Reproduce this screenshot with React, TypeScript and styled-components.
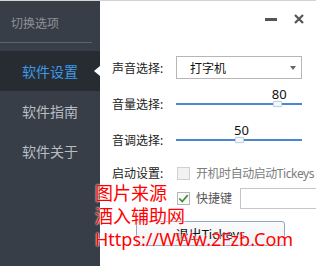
import React from "react";
import styled, { createGlobalStyle } from "styled-components";

const Global = createGlobalStyle`
  html, body { margin: 0; padding: 0; background: #ffffff; }
  body { font-family: "Noto Sans", "Noto Sans CJK SC", sans-serif; }
  * { box-sizing: border-box; }
`;

const Window = styled.div`
  position: relative;
  width: 316px;
  height: 266px;
  display: flex;
  border-top: 1px solid #d3d3d3;
  overflow: hidden;
  background: #ffffff;
`;

const Sidebar = styled.nav`
  width: 100px;
  flex: none;
  background: #373e47;
  display: flex;
  flex-direction: column;
`;

const SideHeader = styled.div`
  height: 42px;
  padding-left: 11px;
  display: flex;
  align-items: center;
  font-size: 12px;
  color: #8d9299;
  border-bottom: 1px solid #5d636b;
  margin: 0 8px 0 0;
  padding-top: 2px;
`;

const Divider = styled.div`
  height: 8px;
`;

const SideItem = styled.div<{ $active?: boolean }>`
  position: relative;
  height: 40px;
  display: flex;
  align-items: center;
  padding-left: 22px;
  font-size: 14px;
  color: ${(p) => (p.$active ? "#3d9ae8" : "#b9bdc3")};
  background: ${(p) => (p.$active ? "#272c32" : "transparent")};
`;

const Pointer = styled.span`
  position: absolute;
  right: 0;
  top: 50%;
  margin-top: -5px;
  width: 0;
  height: 0;
  border-top: 5px solid transparent;
  border-bottom: 5px solid transparent;
  border-right: 6px solid #ffffff;
`;

const Panel = styled.main`
  width: 216px;
  min-width: 0;
  flex: none;
  display: flex;
  flex-direction: column;
  padding: 0 14px 0 12px;
`;

const TitleBar = styled.div`
  height: 36px;
  display: flex;
  align-items: center;
  justify-content: flex-end;
  gap: 17px;
  margin-right: -2px;
`;

const MinBtn = styled.span`
  width: 12px;
  height: 3px;
  background: #555;
`;

const Row = styled.div<{ $mt: number; $h: number }>`
  margin-top: ${(p) => p.$mt}px;
  height: ${(p) => p.$h}px;
  display: grid;
  grid-template-columns: 64px 126px;
  align-items: center;
`;

const Label = styled.span`
  font-size: 12px;
  color: #222;
  white-space: nowrap;
`;

const Select = styled.div`
  height: 23px;
  border: 1px solid #b6b6b6;
  background: #fff;
  display: flex;
  align-items: center;
  justify-content: space-between;
  padding: 0 5px 0 13px;
  font-size: 12px;
  color: #111;
`;

const Caret = styled.span`
  width: 0;
  height: 0;
  border-left: 3.5px solid transparent;
  border-right: 3.5px solid transparent;
  border-top: 4px solid #666;
`;

const Track = styled.div`
  position: relative;
  height: 2px;
  background: #4a88cd;
`;

const Thumb = styled.span`
  position: absolute;
  top: -2px;
  width: 9px;
  height: 6px;
  margin-left: -4px;
  background: #f4f7fa;
  border: 1px solid #c0d3e6;
  border-radius: 1px;
  box-shadow: 0 0 1px rgba(80, 120, 170, 0.4);
`;

const Value = styled.span`
  position: absolute;
  bottom: 4px;
  margin-left: -5px;
  font-size: 13px;
  line-height: 14px;
  color: #111;
`;

const CheckLine = styled.div`
  display: flex;
  align-items: center;
  gap: 6px;
  margin-left: 1px;
  white-space: nowrap;
`;

const Box = styled.span<{ $disabled?: boolean }>`
  width: 13px;
  height: 13px;
  flex: none;
  border: 1px solid ${(p) => (p.$disabled ? "#d0d0d0" : "#b5b5b5")};
  background: ${(p) => (p.$disabled ? "#f2f2f2" : "#fafafa")};
  display: flex;
  align-items: center;
  justify-content: center;
`;

const CheckText = styled.span<{ $muted?: boolean }>`
  font-size: 12px;
  letter-spacing: ${(p) => (p.$muted ? "-0.45px" : "0")};
  color: ${(p) => (p.$muted ? "#7c7c7c" : "#555")};
  white-space: nowrap;
`;

const KeyInput = styled.div`
  width: 81px;
  height: 21px;
  flex: none;
  border: 1px solid #c6c6c6;
  background: #fff;
  margin-left: 2px;
`;

const ButtonRow = styled.div`
  margin-top: 11px;
  padding-left: 24px;
  display: flex;
`;

const Button = styled.button`
  width: 149px;
  height: 25px;
  border: 1px solid #8ea8c6;
  border-radius: 3px;
  background: linear-gradient(#fbfbfb, #eef1f4);
  font-family: "Noto Sans", "Noto Sans CJK SC", sans-serif;
  font-size: 13px;
  color: #111;
  padding: 0;
`;

const Watermark = styled.div`
  position: absolute;
  left: 95px;
  top: 181px;
  color: #ff0000;
  font-size: 18px;
  line-height: 23px;
  font-family: "Noto Sans", "Noto Sans CJK SC", sans-serif;
  text-shadow: 0 0 2px #fff, 0 0 2px #fff;
  white-space: nowrap;
  pointer-events: none;
`;

function Slider({ value }: { value: number }) {
  return (
    <Track>
      <Value style={{ left: `${value}%` }}>{value}</Value>
      <Thumb style={{ left: `${value}%` }} />
    </Track>
  );
}

export default function App() {
  return (
    <>
      <Global />
      <Window>
        <Sidebar>
          <SideHeader>切换选项</SideHeader>
          <Divider />
          <SideItem $active>
            软件设置
            <Pointer />
          </SideItem>
          <SideItem>软件指南</SideItem>
          <SideItem>软件关于</SideItem>
        </Sidebar>
        <Panel>
          <TitleBar>
            <MinBtn />
            <svg width="10" height="10" viewBox="0 0 10 10">
              <path d="M1 1 L9 9 M9 1 L1 9" stroke="#555" strokeWidth="2.2" />
            </svg>
          </TitleBar>
          <Row $mt={19} $h={23}>
            <Label>声音选择:</Label>
            <Select>
              打字机
              <Caret />
            </Select>
          </Row>
          <Row $mt={13} $h={24}>
            <Label>音量选择:</Label>
            <Slider value={80} />
          </Row>
          <Row $mt={12} $h={24}>
            <Label>音调选择:</Label>
            <Slider value={50} />
          </Row>
          <Row $mt={9} $h={24}>
            <Label>启动设置:</Label>
            <CheckLine>
              <Box $disabled />
              <CheckText $muted>开机时自动启动Tickeys</CheckText>
            </CheckLine>
          </Row>
          <Row $mt={1} $h={24}>
            <span />
            <CheckLine>
              <Box>
                <svg width="13" height="11" viewBox="0 0 13 11">
                  <path d="M1.5 5.5 L5 9 L11.5 1.5" fill="none" stroke="#3f8f3f" strokeWidth="2" />
                </svg>
              </Box>
              <CheckText>快捷键</CheckText>
              <KeyInput />
            </CheckLine>
          </Row>
          <ButtonRow>
            <Button>退出Tickeys</Button>
          </ButtonRow>
        </Panel>
        <Watermark>
          图片来源
          <br />
          酒入辅助网
          <br />
          Https://WWw.2Fzb.Com
        </Watermark>
      </Window>
    </>
  );
}
